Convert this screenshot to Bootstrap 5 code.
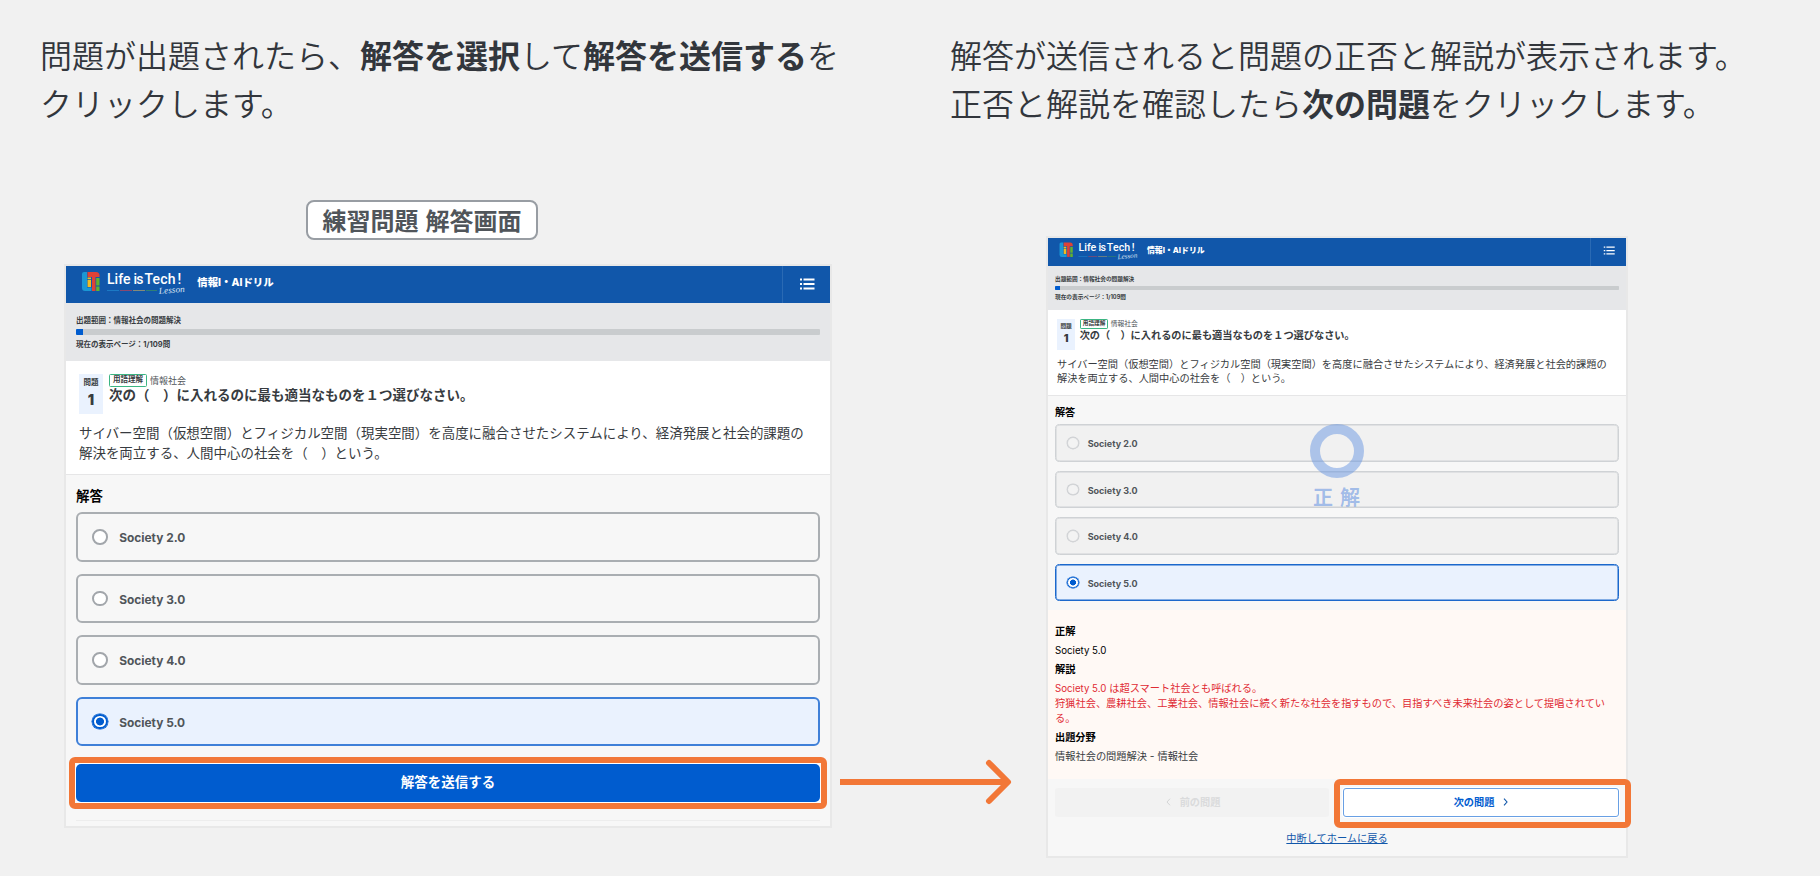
<!DOCTYPE html>
<html>
<head>
<meta charset="utf-8">
<title>情報I・AIドリル 練習問題</title>
<meta name="viewport" content="width=device-width, initial-scale=1">
<link href="https://cdn.jsdelivr.net/npm/bootstrap@5.3.0/dist/css/bootstrap.min.css" rel="stylesheet">
<style>
body{background:#f1f1f1;color:#32363c;font-family:Inter,"Noto Sans CJK JP",sans-serif;overflow:hidden}
.board{height:876px}
.guide{font:350 32px/48px "Noto Sans CJK JP",sans-serif;padding:30px 0 0 40px;white-space:nowrap;height:128px}
.guide b{font-weight:700}
.caption-tag{margin:72px 0 24px 306px;width:232px;height:40px;border:2px solid #989da3;border-radius:8px;background:#fff;color:#50555a;font:700 24px/36px "Noto Sans CJK JP",sans-serif;white-space:nowrap;word-spacing:1.5px}
/* every length inside a screen is multiplied by --k */
.screen{--k:1;border:2px solid #e8e8e8;border-radius:0;background:#f7f7f7;color:#373b40;width:768px;height:564px;margin-left:64px}
.screen.result{--k:.7565;width:582px;height:622px;margin:108px 0 0 136px}
.topbar{height:calc(var(--k)*37px);background:#1157aa;color:#fff;padding:0}
.topbar .logo{width:calc(var(--k)*110px);height:calc(var(--k)*37px);margin-left:calc(var(--k)*14px)}
.result .topbar .logo{margin-left:9.6px}
.topbar .name{font-size:calc(var(--k)*10.4px);font-weight:800;margin-left:calc(var(--k)*7.3px);white-space:nowrap;line-height:1;position:relative;top:-1px}
.result .topbar .name{margin-left:6.2px}
.topbar .menu{width:calc(var(--k)*48px);border-left:1px solid #2a6ab4}
.topbar .menu svg{width:calc(var(--k)*16px);height:calc(var(--k)*12px);margin-top:-1px}
.result .topbar .menu svg{margin-top:-2px;margin-left:1px}
.status{height:calc(var(--k)*58px);background:#e6e7e9;padding:calc(var(--k)*12px) calc(var(--k)*10px) 0;font-size:calc(var(--k)*7.5px);line-height:calc(var(--k)*10px);font-weight:700}
.result .status,.result .answers{padding-left:7px;padding-right:7px}
.status span{position:relative;top:.7px}
.status .progress{height:calc(var(--k)*6px);margin:calc(var(--k)*4px) 0 calc(var(--k)*4.3px);background:#c9ccce;border-radius:calc(var(--k)*1px)}
.status .progress-bar{background:#005ccf;width:calc(var(--k)*7px)}
.question{height:calc(var(--k)*113.5px);background:#fff;border-bottom:1px solid #e6e6e7;padding:calc(var(--k)*12.5px) calc(var(--k)*13px) 0}
.result .question{padding-left:9px}
.qno{width:calc(var(--k)*24px);height:calc(var(--k)*40px);background:#eaf2fe;font-weight:700;font-size:calc(var(--k)*7.5px);line-height:calc(var(--k)*10px);padding-top:calc(var(--k)*4.5px)}
.qno b{display:block;font-size:calc(var(--k)*14px);line-height:calc(var(--k)*14px);margin-top:calc(var(--k)*4.5px)}
.qhead{margin-left:calc(var(--k)*6px)}
.kind{height:calc(var(--k)*13px);width:calc(var(--k)*38px);border:1px solid #3cb583;border-radius:calc(var(--k)*1.5px);font-size:calc(var(--k)*7.5px);font-weight:700;line-height:1}
.field{font-size:calc(var(--k)*9px);line-height:calc(var(--k)*13px);margin-left:calc(var(--k)*3px);color:#50555a}
.qtitle{font-size:calc(var(--k)*13.5px);line-height:calc(var(--k)*17.5px);font-weight:700;white-space:nowrap}
.result .qtitle{font-size:10.2px}
.qbody{font-size:calc(var(--k)*13.46px);line-height:calc(var(--k)*20px);margin:calc(var(--k)*9.2px) 0 0;white-space:nowrap}
.result .qbody{font-size:10.21px;line-height:14.8px}
.answers{padding:calc(var(--k)*11px) calc(var(--k)*10px) 0}
.answers h2{font-size:calc(var(--k)*13.4px);line-height:calc(var(--k)*20px);font-weight:700;color:#000;margin:0 0 calc(var(--k)*6.5px)}
.result .answers h2{position:relative;top:.7px}
.options{display:flex;flex-direction:column;gap:calc(var(--k)*11.85px)}
.option{height:calc(var(--k)*49.7px);border:2px solid #aaaeb2;border-radius:calc(var(--k)*6px);padding-left:calc(var(--k)*14.3px);font-size:calc(var(--k)*11.9px);font-weight:700;color:#50555a}
.result .option{border-width:1px;box-shadow:inset 0 0 0 .5px #cfd2d5;padding-left:11px}
.option .form-check-input{width:calc(var(--k)*15.4px);height:calc(var(--k)*15.4px);border:2px solid #a2a6ab;margin:0 calc(var(--k)*11.5px) 0 0;background:#fff;flex:none;opacity:1}
.result .option .form-check-input{border-width:1.5px;margin-right:9px}
.option span{position:relative;top:calc(var(--k)*1.5px)}
.option.picked{border-color:#3f80d8;background:#eaf2fe}
.result .option.picked{border-color:#1b68cc;box-shadow:inset 0 0 0 .5px #1b68cc}
.option.picked .form-check-input{border-color:#005ccf;background:radial-gradient(circle,#005ccf 0 calc(var(--k)*3.6px),#fff calc(var(--k)*4.3px));box-shadow:0 0 0 .5px #005ccf}
.result .option:not(.picked){background:#f1f1f1;border-color:#cfd2d5}
.result .option:not(.picked) .form-check-input{border-color:#d0d2d5;background:#f3f3f3;box-shadow:0 0 0 .4px #d0d2d5}
.send{position:relative;display:block;width:100%;height:38px;margin-top:17.3px;border:0;border-radius:5px;background:#005ccf;color:#fff;font-size:13.5px;font-weight:700;line-height:1;padding:0}
.send,.next{box-shadow:0 0 0 1px #fff}
.spot::after{content:"";position:absolute;border:6px solid #f27737;border-radius:6px;pointer-events:none}
.send::after{inset:-7px}
.next.spot::after{inset:-10px -13px -12px -10px}
.rule{border-top:1px solid #ededed;margin-top:18px}
.judge{left:262px;top:186px;width:54px;text-align:center}
.judge i{display:block;width:54px;height:54px;border:10px solid rgba(104,149,226,.5);border-radius:50%}
.judge b{display:block;font:700 20px/28px "Noto Sans CJK JP",sans-serif;letter-spacing:7px;margin-top:5px;white-space:nowrap;padding-left:3px;color:rgba(74,130,222,.48)}
.explain{margin-top:8.4px;height:169px;background:#fff9f5;padding:14px 7px 0;font-size:10.22px;line-height:14.8px}
.explain h3{font-size:10.2px;line-height:14.8px;font-weight:700;color:#000;margin:0}
.explain p{margin:4.4px 0 4.3px;white-space:nowrap}
.explain .latin{font-size:9.7px;line-height:1}
.explain .red{color:#df2b34}
.pager{padding:9px 7px 0;gap:14px}
.pager .btn{position:relative;flex:1;height:29.5px;border-radius:3px;font-size:10.2px;font-weight:700;line-height:1;padding:0;display:flex;align-items:center;justify-content:center}
.prev{background:#f2f2f2;color:#dadbdc;gap:9px;border:0}
.prev svg{margin-left:2px}
.next{background:#fff;color:#005ccf;border:1px solid #69a0e4;gap:9px}
.home{font-size:10.2px;line-height:15px;margin-top:14px;color:#1157aa}
.arrow{left:840px;top:758px;width:174px;height:48px}
</style>
</head>
<body>
<main class="board position-relative">
  <div class="row g-0">
    <section class="col-6">
      <div class="guide">問題が出題されたら、<b>解答を選択</b>して<b>解答を送信する</b>を<br>クリックします。</div>
      <div class="caption-tag text-center">練習問題 解答画面</div>
      <div class="screen card">
        <nav class="topbar navbar flex-nowrap align-items-stretch justify-content-start">
          <svg class="logo" viewBox="0 0 110 37">
            <g id="brand">
              <path d="M4 6h3v15.500h4.500V25H5a3 3 0 0 1-3-3V8a2 2 0 0 1 2-2z" fill="#1b97d4"/>
              <path d="M7.500 6H16a3.500 3.500 0 0 1 3.500 3.500V11H7.500z" fill="#df4236"/><path d="M12 10h3.500v15H12z" fill="#df4236"/>
              <path d="M7.500 14h3.500v7H7.500zM7.500 11.500h3.500v1.700H7.500z" fill="#f0bb21"/>
              <path d="M16.200 12h3.300v7.500h-3.300zM16.200 20.500h3.300V25h-3.300z" fill="#65b22e"/>
              <g font-family="Roboto" font-weight="500" font-size="14" fill="#fff"><text x="27" y="17.500" textLength="23.500">Life</text><text x="53.500" y="17.500" textLength="10">is</text><text x="64.500" y="17.500" textLength="31">Tech</text><text x="97.500" y="17.500">!</text></g>
              <path d="M27 24.500h12" stroke="#1c7ac5"/><path d="M40 24.500h12" stroke="#8a496f"/><path d="M53 24.500h12" stroke="#858a78"/><path d="M66 24.500h11" stroke="#2f8075"/>
              <text x="79" y="28" font-family="Liberation Serif" font-style="italic" font-size="9" fill="#d4e1f0" textLength="26" lengthAdjust="spacingAndGlyphs" transform="rotate(-5 79 27)">Lesson</text>
            </g>
          </svg>
          <div class="name align-self-center">情報I・AIドリル</div>
          <div class="menu ms-auto d-flex align-items-center justify-content-center">
            <svg viewBox="0 0 16 12"><path d="M1 1.500h2M1 6h2M1 10.500h2M4.500 1.500h11M4.500 6h11M4.500 10.500h11" stroke="#fff" stroke-width="1.800"/></svg>
          </div>
        </nav>
        <div class="status">
          <div><span>出題範囲：情報社会の問題解決</span></div>
          <div class="progress"><div class="progress-bar"></div></div>
          <div><span>現在の表示ページ：1/109問</span></div>
        </div>
        <div class="question">
          <div class="d-flex">
            <div class="qno text-center">問題<b>1</b></div>
            <div class="qhead">
              <div class="d-flex"><div class="kind d-flex align-items-center justify-content-center">用語理解</div><div class="field">情報社会</div></div>
              <div class="qtitle">次の（　）に入れるのに最も適当なものを１つ選びなさい。</div>
            </div>
          </div>
          <p class="qbody">サイバー空間（仮想空間）とフィジカル空間（現実空間）を高度に融合させたシステムにより、経済発展と社会的課題の<br>解決を両立する、人間中心の社会を（　）という。</p>
        </div>
        <div class="answers">
          <h2>解答</h2>
          <div class="options">
            <label class="option d-flex align-items-center"><input class="form-check-input" type="radio" name="a"><span>Society 2.0</span></label>
            <label class="option d-flex align-items-center"><input class="form-check-input" type="radio" name="a"><span>Society 3.0</span></label>
            <label class="option d-flex align-items-center"><input class="form-check-input" type="radio" name="a"><span>Society 4.0</span></label>
            <label class="option picked d-flex align-items-center"><input class="form-check-input" type="radio" name="a" checked><span>Society 5.0</span></label>
          </div>
          <button class="btn send spot">解答を送信する</button>
          <div class="rule"></div>
        </div>
      </div>
    </section>
    <section class="col-6">
      <div class="guide">解答が送信されると問題の正否と解説が表示されます。<br>正否と解説を確認したら<b>次の問題</b>をクリックします。</div>
      <div class="screen result card">
        <nav class="topbar navbar flex-nowrap align-items-stretch justify-content-start">
          <svg class="logo" viewBox="0 0 110 37"><use href="#brand"/></svg>
          <div class="name align-self-center">情報I・AIドリル</div>
          <div class="menu ms-auto d-flex align-items-center justify-content-center">
            <svg viewBox="0 0 16 12"><path d="M1 1.500h2M1 6h2M1 10.500h2M4.500 1.500h11M4.500 6h11M4.500 10.500h11" stroke="#fff" stroke-width="1.600"/></svg>
          </div>
        </nav>
        <div class="status">
          <div><span>出題範囲：情報社会の問題解決</span></div>
          <div class="progress"><div class="progress-bar"></div></div>
          <div><span>現在の表示ページ：1/109問</span></div>
        </div>
        <div class="question">
          <div class="d-flex">
            <div class="qno text-center">問題<b>1</b></div>
            <div class="qhead">
              <div class="d-flex"><div class="kind d-flex align-items-center justify-content-center">用語理解</div><div class="field">情報社会</div></div>
              <div class="qtitle">次の（　）に入れるのに最も適当なものを１つ選びなさい。</div>
            </div>
          </div>
          <p class="qbody">サイバー空間（仮想空間）とフィジカル空間（現実空間）を高度に融合させたシステムにより、経済発展と社会的課題の<br>解決を両立する、人間中心の社会を（　）という。</p>
        </div>
        <div class="answers">
          <h2>解答</h2>
          <div class="options">
            <label class="option d-flex align-items-center"><input class="form-check-input" type="radio" name="b"><span>Society 2.0</span></label>
            <label class="option d-flex align-items-center"><input class="form-check-input" type="radio" name="b"><span>Society 3.0</span></label>
            <label class="option d-flex align-items-center"><input class="form-check-input" type="radio" name="b"><span>Society 4.0</span></label>
            <label class="option picked d-flex align-items-center"><input class="form-check-input" type="radio" name="b" checked><span>Society 5.0</span></label>
          </div>
        </div>
        <div class="explain">
          <h3>正解</h3>
          <p class="text-black"><span class="latin">Society 5.0</span></p>
          <h3>解説</h3>
          <p class="red"><span class="latin">Society 5.0</span> は超スマート社会とも呼ばれる。<br>狩猟社会、農耕社会、工業社会、情報社会に続く新たな社会を指すもので、目指すべき未来社会の姿として提唱されてい<br>る。</p>
          <h3>出題分野</h3>
          <p>情報社会の問題解決 - 情報社会</p>
        </div>
        <div class="pager d-flex">
          <div class="btn prev"><svg width="5" height="8" viewBox="0 0 5 8"><path d="M4 .7 1 4l3 3.300" fill="none" stroke="#d4d5d6"/></svg>前の問題</div>
          <div class="btn next spot">次の問題<svg width="5" height="8" viewBox="0 0 5 8"><path d="M1 .7 4 4 1 7.300" fill="none" stroke="#1157aa" stroke-width="1.100"/></svg></div>
        </div>
        <a class="home d-block text-center text-decoration-underline">中断してホームに戻る</a>
        <div class="judge position-absolute"><i></i><b>正解</b></div>
      </div>
    </section>
  </div>
  <svg class="arrow position-absolute" viewBox="0 0 174 48"><path d="M0 24h168" stroke="#f27737" stroke-width="6"/><path d="M149 5l19 19-19 19" fill="none" stroke="#f27737" stroke-width="6" stroke-linecap="round" stroke-linejoin="round"/></svg>
</main>
<script src="https://cdn.jsdelivr.net/npm/bootstrap@5.3.0/dist/js/bootstrap.bundle.min.js"></script>
</body>
</html>
